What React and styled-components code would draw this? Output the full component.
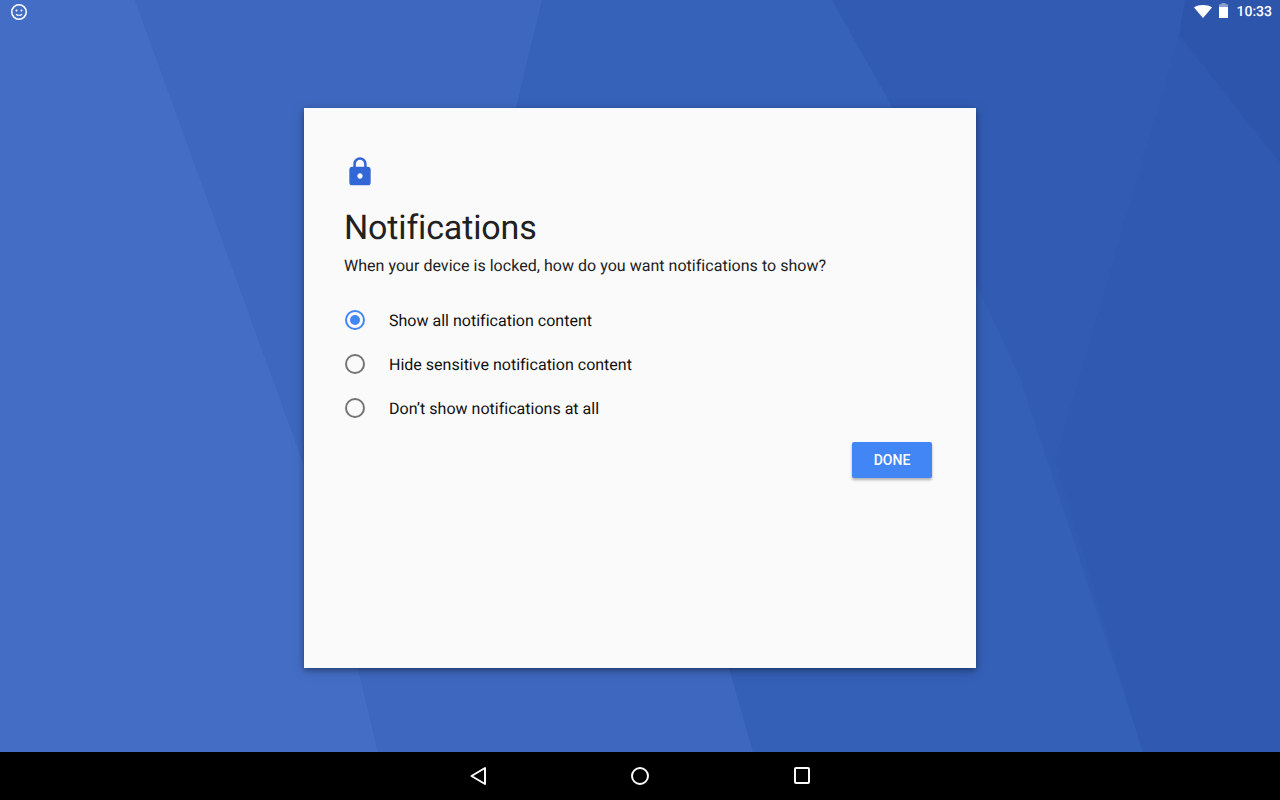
import React from 'react';
import styled, { createGlobalStyle } from 'styled-components';

const Global = createGlobalStyle`
  html, body { margin: 0; padding: 0; }
  body { font-family: Roboto, "Liberation Sans", sans-serif; text-rendering: geometricPrecision; }
  #root { height: 800px; }
`;

const Screen = styled.div`
  width: 1280px; height: 800px; display: flex; flex-direction: column; overflow: hidden;
`;
const Desktop = styled.div`
  position: relative; flex: 1; display: flex; flex-direction: column; background: #3660b8;
`;
const Wallpaper = styled.svg`
  position: absolute; inset: 0; width: 100%; height: 100%;
`;
const StatusBar = styled.div`
  position: relative; height: 24px; display: flex; align-items: center; justify-content: space-between; padding: 0 8px 0 10px;
`;
const StatusRight = styled.div`
  display: flex; align-items: center; color: #fff; font-size: 14px; font-weight: 500;
`;
const WifiIcon = styled.svg`
  display: block; width: 18px; height: 13px; margin-bottom: 2px;
`;
const BatteryIcon = styled.svg`
  display: block; width: 9px; height: 15px; margin: 0 0 3px 7px;
`;
const Clock = styled.span`
  margin-left: 8px;
`;
const Stage = styled.div`
  position: relative; flex: 1; display: flex; justify-content: center; padding-top: 84px;
`;
const Dialog = styled.div`
  width: 672px; height: 560px; box-sizing: border-box; background: #fafafa; padding: 48px 44px 0 40px;
  box-shadow: 0 2px 5px rgba(0,0,0,.3), 0 3px 12px rgba(0,0,0,.2);
`;
const LockIcon = styled.svg`
  display: block; width: 32px; height: 32px; color: #3367d6;
`;
const Title = styled.h1`
  margin: 20px 0 0; font-size: 34px; font-weight: 400; line-height: 40px; color: #212121; letter-spacing: -0.15px;
`;
const Subtitle = styled.p`
  margin: 8px 0 0; font-size: 16px; line-height: 20px; color: #212121; letter-spacing: 0.03px;
`;
const Options = styled.div`
  margin-top: 22px; display: flex; flex-direction: column;
`;
const Option = styled.div`
  display: flex; align-items: center; height: 44px; font-size: 16px; color: #111; letter-spacing: 0.012px;
`;
const Radio = styled.span`
  box-sizing: border-box; width: 20px; height: 20px; margin-left: 1px; margin-right: 24px; border-radius: 50%;
  border: 2px solid ${p => (p.$on ? '#4285f4' : '#757575')};
  display: flex; align-items: center; justify-content: center;
  &::after { content: ''; width: 10px; height: 10px; border-radius: 50%; background: ${p => (p.$on ? '#4285f4' : 'transparent')}; }
`;
const Actions = styled.div`
  display: flex; justify-content: flex-end; margin-top: 12px;
`;
const DoneButton = styled.button`
  width: 80px; height: 36px; padding: 0; border: 0; border-radius: 2px; background: #4285f4; color: #fff;
  font-family: inherit; font-size: 14px; font-weight: 500;
  box-shadow: 0 2px 3px rgba(0,0,0,.3);
`;
const NavBar = styled.div`
  height: 48px; background: #000; display: flex; align-items: center; justify-content: center; gap: 138px;
`;
const NavIcon = styled.svg`
  width: 24px; height: 24px; display: block; fill: none; stroke: #fafafa; stroke-width: 2; stroke-linejoin: round;
`;

export default function App() {
  return (
    <Screen>
      <Global />
      <Desktop>
        <Wallpaper viewBox="0 0 1280 752" preserveAspectRatio="none">
          <rect width="1280" height="752" fill="#3560b8" />
          <polygon points="542,0 832,0 893,108 976,283 516,300 516,108" fill="#3662ba" />
          <polygon points="832,0 1185,0 1179,35 1280,163 1280,752 1143,752 1021,380 976,283 893,108" fill="#325cb4" />
          <polygon points="1179,35 1280,163 1280,752 1143,752 1055,460" fill="#305ab2" />
          <polygon points="1185,0 1280,0 1280,163 1179,35" fill="#2c55ab" />
          <polygon points="135,0 542,0 516,108 729,668 753,752 378,752 358,668 304,465" fill="#3e68c0" />
          <polygon points="0,0 135,0 304,465 358,668 378,752 0,752" fill="#446ec6" />
        </Wallpaper>
        <StatusBar>
          <svg width="18" height="18" viewBox="0 0 18 18" fill="none" style={{ position: 'relative' }}>
            <circle cx="9" cy="9" r="7.25" stroke="#fff" strokeWidth="1.5" />
            <circle cx="6.5" cy="7.5" r="1" fill="#fff" />
            <circle cx="11.5" cy="7.5" r="1" fill="#fff" />
            <path d="M6 11.2c1.5 1.4 4.5 1.4 6 0" stroke="#fff" strokeWidth="1.2" />
          </svg>
          <StatusRight>
            <WifiIcon viewBox="0 0 18 13"><path d="M0 2.4C2.4.8 5.5 0 9 0s6.6.8 9 2.4L9 13z" fill="#fff" /></WifiIcon>
            <BatteryIcon viewBox="0 0 9 15">
              <path d="M2.5 0h4v1.2H9V4H0V1.2h2.5z" fill="#fff" fillOpacity=".45" />
              <path d="M0 4h9v11H0z" fill="#fff" />
            </BatteryIcon>
            <Clock>10:33</Clock>
          </StatusRight>
        </StatusBar>
        <Stage>
          <Dialog>
            <LockIcon viewBox="0 0 24 24">
              <path fill="currentColor" d="M18 8h-1V6c0-2.76-2.24-5-5-5S7 3.24 7 6v2H6c-1.1 0-2 .9-2 2v10c0 1.1.9 2 2 2h12c1.1 0 2-.9 2-2V10c0-1.1-.9-2-2-2zm-6 9c-1.1 0-2-.9-2-2s.9-2 2-2 2 .9 2 2-.9 2-2 2zm3.1-9H8.9V6c0-1.71 1.39-3.1 3.1-3.1s3.1 1.39 3.1 3.1v2z" />
            </LockIcon>
            <Title>Notifications</Title>
            <Subtitle>When your device is locked, how do you want notifications to show?</Subtitle>
            <Options>
              <Option><Radio $on />Show all notification content</Option>
              <Option><Radio />Hide sensitive notification content</Option>
              <Option><Radio />Don’t show notifications at all</Option>
            </Options>
            <Actions><DoneButton>DONE</DoneButton></Actions>
          </Dialog>
        </Stage>
      </Desktop>
      <NavBar>
        <NavIcon viewBox="0 0 24 24"><path d="M19 4v16L5.5 12z" /></NavIcon>
        <NavIcon viewBox="0 0 24 24"><circle cx="12" cy="12" r="8" /></NavIcon>
        <NavIcon viewBox="0 0 24 24"><rect x="5" y="4" width="14" height="15" rx="1" /></NavIcon>
      </NavBar>
    </Screen>
  );
}
